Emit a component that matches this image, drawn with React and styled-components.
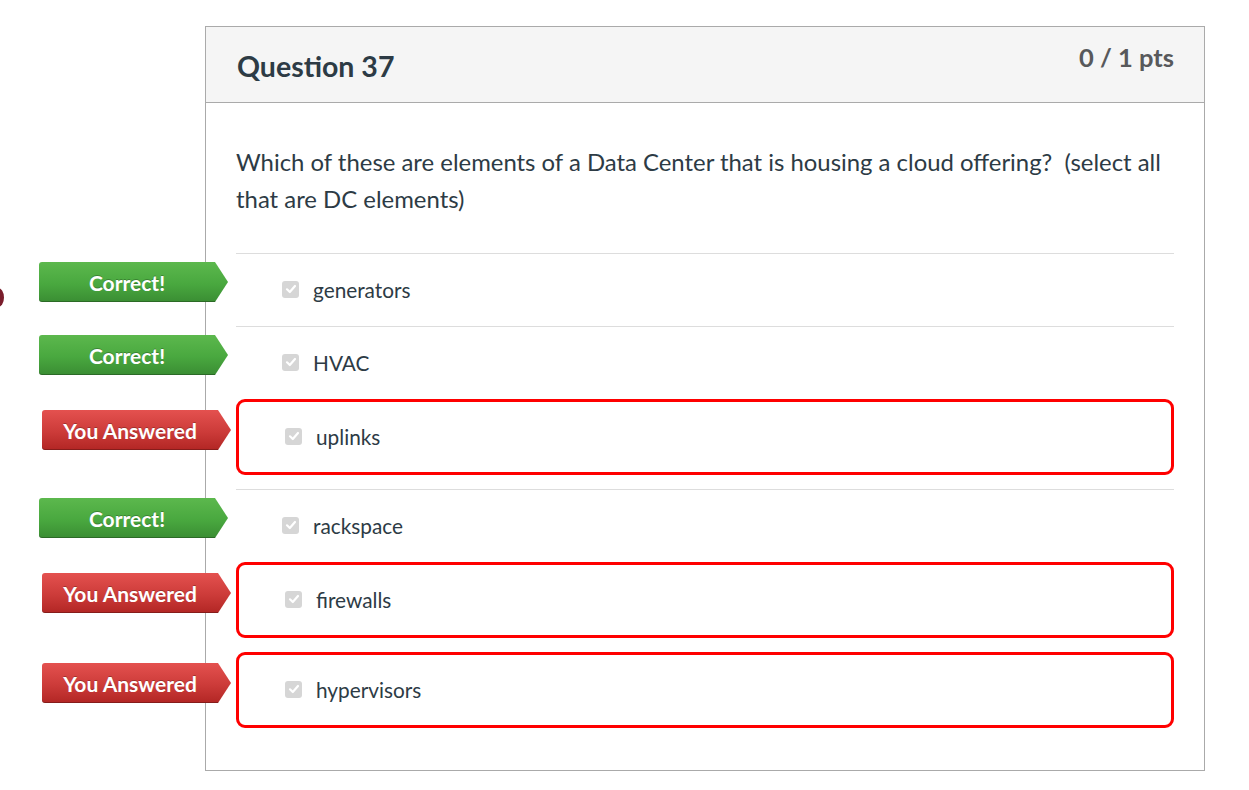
import React from "react";
import styled, { createGlobalStyle, css } from "styled-components";

const GlobalStyle = createGlobalStyle`
  html, body {
    margin: 0;
    padding: 0;
    background: #fff;
    font-family: Lato, "Liberation Sans", sans-serif;
    color: #2d3b45;
  }
`;

const Page = styled.div`
  position: relative;
  width: 1249px;
  height: 790px;
  padding: 26px 0 0 205px;
  box-sizing: border-box;
  overflow: hidden;
`;

const EdgeDot = styled.div`
  position: absolute;
  left: -8px;
  top: 288px;
  width: 12px;
  height: 19px;
  border-radius: 50%;
  background: #7a1d2c;
`;

const Card = styled.section`
  width: 1000px;
  height: 745px;
  box-sizing: border-box;
  border: 1px solid #aaaaaa;
  background: #fff;
`;

const Header = styled.header`
  display: flex;
  justify-content: space-between;
  align-items: flex-start;
  height: 76px;
  box-sizing: border-box;
  padding: 0 30px 0 31px;
  background: #f5f5f5;
  border-bottom: 1px solid #aaaaaa;
`;

const Title = styled.h2`
  margin: 20px 0 0;
  font-size: 28.5px;
  font-weight: 700;
  line-height: 38px;
  color: #2d3b45;
`;

const Points = styled.div`
  margin-top: 13px;
  font-size: 25.5px;
  font-weight: 700;
  line-height: 34px;
  color: #58595b;
`;

const Body = styled.div`
  padding: 40px 30px 0;
`;

const Prompt = styled.p`
  margin: 0 0 36px;
  font-size: 23.9px;
  line-height: 37px;
  color: #2d3b45;
`;

const List = styled.div`
  display: flex;
  flex-direction: column;
`;

const Answer = styled.div`
  position: relative;
  display: flex;
  align-items: center;
  gap: 14px;
  height: 72px;
  padding-left: 46px;
  border-top: 1px solid #dddddd;

  ${({ $wrong }) =>
    $wrong &&
    css`
      height: 70px;
      border: 3px solid #ff0000;
      border-radius: 9px;
      margin-bottom: 14px;
    `}
`;

const Box = styled.span`
  display: inline-flex;
  align-items: center;
  justify-content: center;
  width: 17px;
  height: 17px;
  border-radius: 3px;
  background: #d6d6d6;
  margin-top: -2px;
`;

const Label = styled.span`
  font-size: 20.8px;
  line-height: 24px;
  color: #2d3b45;
`;

const Flag = styled.div`
  position: absolute;
  top: 8px;
  right: calc(100% + 8px);
  width: 189px;
  height: 40px;
  box-sizing: border-box;
  padding-right: 13px;
  display: flex;
  align-items: center;
  justify-content: center;
  border-radius: 3px 0 0 3px;
  clip-path: polygon(0 0, 176px 0, 100% 50%, 176px 100%, 0 100%);
  font-size: 21px;
  font-weight: 700;
  color: #fff;
  text-shadow: 0 -1px 0 rgba(0, 0, 0, 0.25);
  background: ${({ $wrong }) =>
    $wrong
      ? "linear-gradient(to bottom, #e4514f 0%, #cc3b39 55%, #b22624 100%)"
      : "linear-gradient(to bottom, #5cb84d 0%, #49a83f 55%, #3a8d33 100%)"};
  box-shadow: inset 0 -1px 0 rgba(0, 0, 0, 0.25);
`;

const CheckIcon = () => (
  <svg width="12" height="12" viewBox="0 0 12 12" aria-hidden="true">
    <path
      d="M2 6.3 L4.8 9 L10 3"
      fill="none"
      stroke="#ffffff"
      strokeWidth="2.2"
      strokeLinecap="round"
      strokeLinejoin="round"
    />
  </svg>
);

const answers = [
  { text: "generators", flag: "correct" },
  { text: "HVAC", flag: "correct" },
  { text: "uplinks", flag: "wrong" },
  { text: "rackspace", flag: "correct" },
  { text: "firewalls", flag: "wrong" },
  { text: "hypervisors", flag: "wrong" },
];

export default function App() {
  return (
    <>
      <GlobalStyle />
      <Page>
        <EdgeDot />
        <Card>
          <Header>
            <Title>Question 37</Title>
            <Points>0 / 1 pts</Points>
          </Header>
          <Body>
            <Prompt>
              Which of these are elements of a Data Center that is housing a
              cloud offering?&nbsp; (select all that are DC elements)
            </Prompt>
            <List>
              {answers.map((a, i) => {
                const wrong = a.flag === "wrong";
                return (
                  <Answer key={i} $wrong={wrong}>
                    <Flag $wrong={wrong}>
                      {wrong ? "You Answered" : "Correct!"}
                    </Flag>
                    <Box>
                      <CheckIcon />
                    </Box>
                    <Label>{a.text}</Label>
                  </Answer>
                );
              })}
            </List>
          </Body>
        </Card>
      </Page>
    </>
  );
}
